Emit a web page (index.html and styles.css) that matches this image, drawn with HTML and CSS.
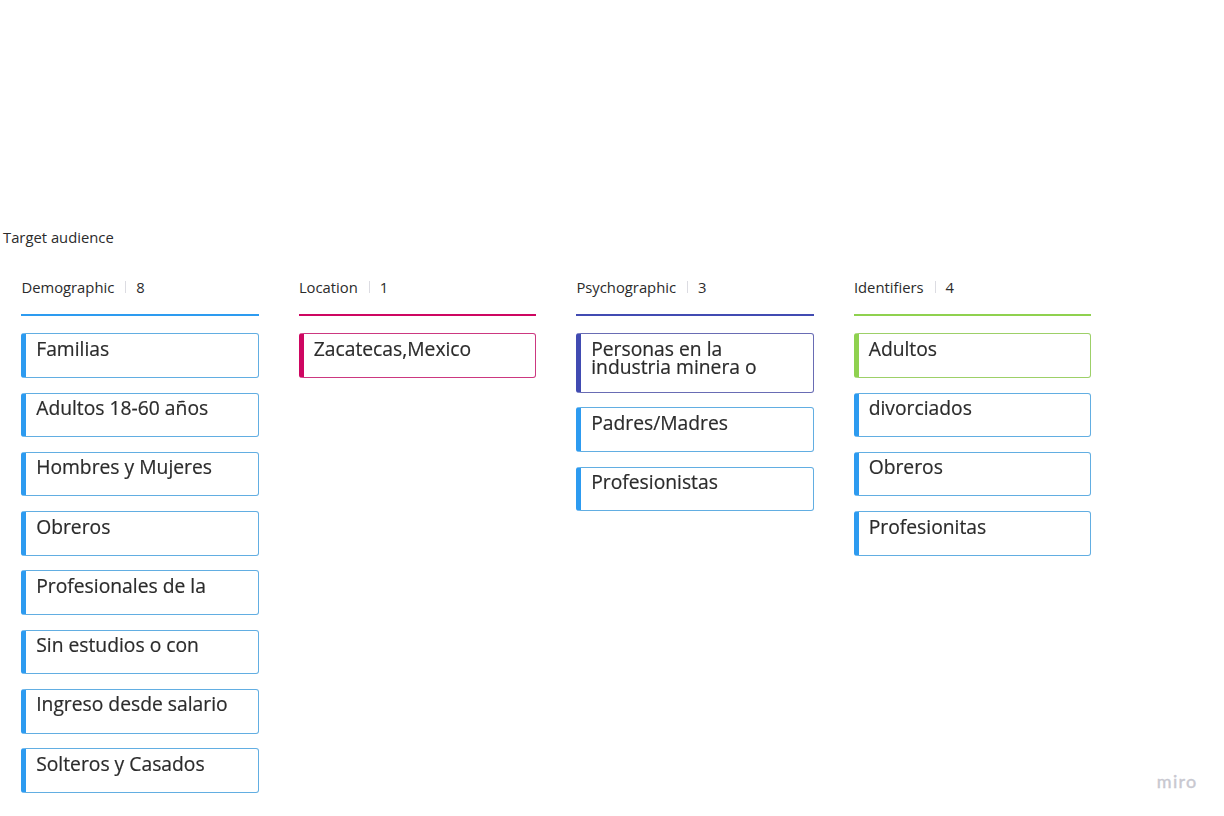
FILE: index.html
```html
<!DOCTYPE html>
<html lang="es">
<head>
<meta charset="utf-8">
<title>Target audience</title>
<link rel="stylesheet" href="styles.css">
</head>
<body>
<main class="board">
  <h1 class="title">Target audience</h1>
  <div class="columns">
    <section class="column blue">
      <h2 class="head"><span>Demographic</span><span class="count">8</span></h2>
      <ul class="cards">
        <li class="card blue"><p>Familias</p></li>
        <li class="card blue"><p>Adultos 18-60 años</p></li>
        <li class="card blue"><p>Hombres y Mujeres</p></li>
        <li class="card blue"><p>Obreros</p></li>
        <li class="card blue"><p>Profesionales de la</p></li>
        <li class="card blue"><p>Sin estudios o con</p></li>
        <li class="card blue"><p>Ingreso desde salario</p></li>
        <li class="card blue"><p>Solteros y Casados</p></li>
      </ul>
    </section>
    <section class="column pink">
      <h2 class="head"><span>Location</span><span class="count">1</span></h2>
      <ul class="cards">
        <li class="card pink"><p>Zacatecas,Mexico</p></li>
      </ul>
    </section>
    <section class="column indigo">
      <h2 class="head"><span>Psychographic</span><span class="count">3</span></h2>
      <ul class="cards">
        <li class="card indigo tall"><p>Personas en la<br>industria minera o</p></li>
        <li class="card blue"><p>Padres/Madres</p></li>
        <li class="card blue"><p>Profesionistas</p></li>
      </ul>
    </section>
    <section class="column green">
      <h2 class="head"><span>Identifiers</span><span class="count">4</span></h2>
      <ul class="cards">
        <li class="card green"><p>Adultos</p></li>
        <li class="card blue"><p>divorciados</p></li>
        <li class="card blue"><p>Obreros</p></li>
        <li class="card blue"><p>Profesionitas</p></li>
      </ul>
    </section>
  </div>
</main>
<div class="brand">miro</div>
</body>
</html>
```
FILE: styles.css
```css
* { box-sizing: border-box; margin: 0; padding: 0; }
body {
  width: 1224px;
  height: 816px;
  overflow: hidden;
  background: #fff;
  color: #2b2b2b;
  font-family: "Open Sans", sans-serif;
  font-size: 14.8px;
}
.board { padding-top: 227px; }
.title {
  padding-left: 3px;
  font-size: inherit;
  font-weight: 400;
  line-height: 20px;
}
.columns {
  display: flex;
  gap: 40px;
  padding: 30px 0 0 21.4px;
}
.column { width: 237.5px; }
.head {
  display: flex;
  align-items: center;
  height: 38.5px;
  padding-bottom: 16.5px;
  border-bottom: 2px solid var(--line);
  font-size: inherit;
  font-weight: 400;
  line-height: 20px;
}
.count {
  display: flex;
  align-items: center;
}
.count::before {
  content: "";
  width: 1px;
  height: 12px;
  margin: 0 10px 0 11px;
  background: #dcdce2;
}
.cards {
  display: flex;
  flex-direction: column;
  gap: 14.8px;
  padding-top: 17.8px;
  list-style: none;
}
.card {
  height: 44.5px;
  padding: 5.4px 0 0 9.8px;
  border: 1px solid var(--edge);
  border-left: 5px solid var(--line);
  border-radius: 3px;
  font-size: 19.3px;
  line-height: 18.6px;
}
.card p {
  filter: blur(0.5px);
  -webkit-text-stroke: 0.2px #2b2b2b;
}
.tall { height: 59.4px; }
.blue { --line: #2d9bf0; --edge: #62aee2; }
.pink { --line: #ce0661; --edge: #cc3880; }
.indigo { --line: #414bb2; --edge: #696cb4; }
.green { --line: #8fd14f; --edge: #9dd068; }
.brand {
  position: absolute;
  right: 26.5px;
  bottom: 24px;
  color: #c8c8d0;
  font: 400 18px/22px Lato, sans-serif;
  letter-spacing: 1.3px;
  -webkit-text-stroke: 0.4px #c8c8d0;
}
```
